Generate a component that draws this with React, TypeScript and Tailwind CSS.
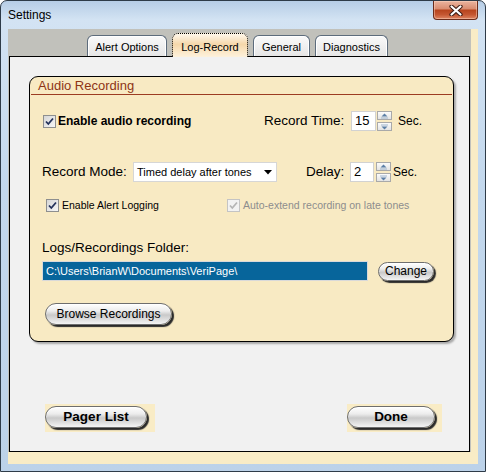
import React from 'react';

function Check({ disabled = false }: { disabled?: boolean }) {
  return (
    <span
      className={
        'flex h-[13px] w-[13px] shrink-0 items-center justify-center border ' +
        (disabled
          ? 'border-[#c4c4c4] bg-[#f2f2f2]'
          : 'border-[#8e8f8f] bg-[linear-gradient(135deg,#d6d6d6,#f6f6f6)]')
      }
    >
      <svg width="11" height="11" viewBox="0 0 11 11">
        <path
          d="M2 5.5 L4.3 8 L9 2.5"
          fill="none"
          stroke={disabled ? '#b5b5b5' : '#23315a'}
          strokeWidth="1.8"
        />
      </svg>
    </span>
  );
}

function Spinner() {
  return (
    <div className="flex h-[20px] w-[15px] flex-col justify-between">
      <span className="flex h-[9px] items-center justify-center border border-[#a9a9a9] bg-[linear-gradient(#fbfbfb,#e3e3e3)]">
        <svg width="9" height="6" viewBox="0 0 9 6">
          <path d="M1.5 3.5 L4.5 0.5 L7.5 3.5 Z" fill="#5b7fa6" />
          <path d="M1 5 H8" stroke="#9fb6cf" strokeWidth="1" />
        </svg>
      </span>
      <span className="flex h-[9px] items-center justify-center border border-[#a9a9a9] bg-[linear-gradient(#fbfbfb,#e3e3e3)]">
        <svg width="9" height="6" viewBox="0 0 9 6">
          <path d="M1 1 H8" stroke="#9fb6cf" strokeWidth="1" />
          <path d="M1.5 2.5 L4.5 5.5 L7.5 2.5 Z" fill="#5b7fa6" />
        </svg>
      </span>
    </div>
  );
}

function NumBox({ value, w }: { value: string; w: string }) {
  return (
    <div className={`${w} flex h-[20px] items-center border border-[#d2d2d2] bg-white pl-[3px] text-[13px]`}>
      {value}
    </div>
  );
}

const pill =
  'flex items-center justify-center rounded-full border border-[#6e6e6e] bg-[linear-gradient(#ffffff,#ececec_35%,#c9c9c9_55%,#dcdcdc_75%,#f4f4f4)] shadow-[2px_2px_1px_#2a2a2a,inset_0_1px_0_#fff] text-black';

const tabBase =
  'h-[21px] rounded-t-[6px] border border-b-0 border-[#5d6c7c] bg-[linear-gradient(#fafafa,#e6e6e6)] pt-[4px] text-center text-[11px] leading-[14px] shadow-[inset_1px_1px_0_#fff,inset_-1px_0_0_#fff]';

export default function App() {
  return (
    <div className="h-[472px] w-[486px] font-['Liberation_Sans',Arial,sans-serif] text-black">
      <div className="flex h-full w-full flex-col rounded-t-[7px] border border-[#2e3b48] bg-[linear-gradient(180deg,#b6cde6,#d3e3f3_4%,#c3d8ed_40%,#bcd2e9)]">
        {/* Title bar */}
        <div className="flex h-[28px] items-start justify-between">
          <span className="ml-[7px] mt-[7px] text-[12px] leading-[14px]">Settings</span>
          <div className="mr-[7px] flex h-[19px] w-[45px] items-center justify-center rounded-b-[4px] border border-t-0 border-[#6b2c1b] bg-[linear-gradient(#ebb49f,#da8e72_42%,#b8451f_52%,#c45631_75%,#de8563)] shadow-[inset_0_0_0_1px_rgba(255,220,200,0.45)]">
            <svg width="14" height="11" viewBox="0 0 14 11">
              <path d="M2.5 1.5 L11.5 9.5 M11.5 1.5 L2.5 9.5" stroke="#3b1a12" strokeWidth="4.2" strokeLinecap="round" />
              <path d="M2.5 1.5 L11.5 9.5 M11.5 1.5 L2.5 9.5" stroke="#ffffff" strokeWidth="2.2" strokeLinecap="round" />
            </svg>
          </div>
        </div>

        {/* Client area */}
        <div className="mx-[7px] mb-[7px] flex flex-1 flex-col bg-[#f9ecc6]">
          <div className="flex h-[423px] w-[463px] flex-col bg-[#c1c1bb]">
            {/* Tabs */}
            <div className="flex h-[27px] items-end gap-[5px] pl-[79px]">
              <div className={`${tabBase} w-[80px]`}>Alert Options</div>
              <div className="relative z-10 mb-[-1px] h-[24px] w-[76px] rounded-t-[6px] border border-b-0 border-dotted border-black bg-[linear-gradient(#fff8ec,#f5d7aa_45%,#fbe7c6_75%,#fdf1dc)] pt-[6px] text-center text-[11px] leading-[14px]">
                Log-Record
              </div>
              <div className={`${tabBase} w-[57px]`}>General</div>
              <div className={`${tabBase} w-[73px]`}>Diagnostics</div>
            </div>

            {/* Panel */}
            <div className="mx-[1px] flex flex-1 flex-col border border-black bg-[#f1f1f1]">
              {/* Group box */}
              <div className="ml-[19px] mt-[19px] flex h-[266px] w-[425px] flex-col rounded-[9px] border border-black bg-[#f8eac3] shadow-[2px_2px_2px_rgba(0,0,0,0.3)]">
                <div className="mx-[1px] h-[18px] border-b border-[#9c3c22] pl-[7px] text-[13px] leading-[17px] text-[#8e3516]">
                  Audio Recording
                </div>

                {/* Row 1 */}
                <div className="mt-[16px] flex h-[20px] items-center pl-[13px]">
                  <div className="flex w-[221px] items-center">
                    <Check />
                    <span className="ml-[2px] text-[12px] font-bold">Enable audio recording</span>
                  </div>
                  <span className="w-[87px] text-[13.5px]">Record Time:</span>
                  <NumBox value="15" w="w-[25px]" />
                  <div className="ml-[1px]">
                    <Spinner />
                  </div>
                  <span className="ml-[6px] text-[12px]">Sec.</span>
                </div>

                {/* Row 2 */}
                <div className="mt-[31px] flex h-[20px] items-center pl-[12px]">
                  <span className="w-[91px] text-[13.5px]">Record Mode:</span>
                  <div className="flex h-[20px] w-[144px] items-center justify-between border border-[#d6d6d6] bg-white pl-[3px] pr-[4px] text-[11px]">
                    <span>Timed delay after tones</span>
                    <svg width="8" height="5" viewBox="0 0 8 5">
                      <path d="M0 0 H8 L4 4.5 Z" fill="#000" />
                    </svg>
                  </div>
                  <span className="ml-[29px] w-[44px] text-[13.5px]">Delay:</span>
                  <NumBox value="2" w="w-[24px]" />
                  <div className="ml-[2px]">
                    <Spinner />
                  </div>
                  <span className="ml-[2px] text-[12px]">Sec.</span>
                </div>

                {/* Row 3 */}
                <div className="mt-[17px] flex h-[13px] items-center pl-[16px]">
                  <div className="flex w-[181px] items-center">
                    <Check />
                    <span className="ml-[3px] text-[10.5px]">Enable Alert Logging</span>
                  </div>
                  <Check disabled />
                  <span className="ml-[3px] text-[10.5px] text-[#8d8d8d]">Auto-extend recording on late tones</span>
                </div>

                {/* Folder */}
                <div className="mt-[28px] pl-[12px] text-[13.5px] leading-[16px]">Logs/Recordings Folder:</div>
                <div className="mt-[5px] flex h-[20px] items-center pl-[12px]">
                  <div className="flex h-[20px] w-[326px] items-center border border-[#d9d9d9] bg-[#07659b] pl-[3px] text-[11px] text-white">
                    C:\Users\BrianW\Documents\VeriPage\
                  </div>
                  <div className={`${pill} ml-[10px] h-[19px] w-[56px] text-[12px]`}>Change</div>
                </div>

                <div className="mt-[22px] pl-[15px]">
                  <div className={`${pill} h-[22px] w-[127px] text-[12px]`}>Browse Recordings</div>
                </div>
              </div>

              {/* Bottom buttons */}
              <div className="mt-[62px] flex justify-between pl-[35px] pr-[27px]">
                <div className="h-[28px] w-[110px] bg-[#f9ecc6] pt-[2px]">
                  <div className={`${pill} h-[22px] w-[102px] text-[13.5px] font-bold`}>Pager List</div>
                </div>
                <div className="h-[28px] w-[95px] bg-[#f9ecc6] pt-[2px]">
                  <div className={`${pill} h-[22px] w-[88px] text-[13.5px] font-bold`}>Done</div>
                </div>
              </div>
            </div>
          </div>
        </div>
      </div>
    </div>
  );
}
